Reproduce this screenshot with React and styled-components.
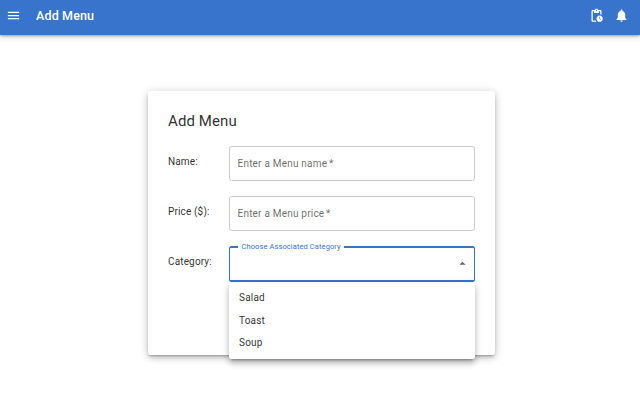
import React from "react";
import styled, { createGlobalStyle } from "styled-components";
import { MdMenu, MdNotifications, MdPendingActions, MdArrowDropUp } from "react-icons/md";

const GlobalStyle = createGlobalStyle`
  * { box-sizing: border-box; }
  body {
    margin: 0;
    background: #fff;
    color: rgba(0, 0, 0, 0.84);
    font-family: Roboto, sans-serif;
    font-size: 10px;
    overflow: hidden;
  }
`;

const Page = styled.div`
  display: flex;
  flex-direction: column;
  height: 414px;
`;

const AppBar = styled.header`
  display: flex;
  align-items: center;
  flex: none;
  height: 35px;
  padding: 0 11px 5px 6px;
  background: #3874cb;
  color: #fff;
  box-shadow: 0 1px 2.5px rgba(0, 0, 0, 0.3), 0 2px 6px rgba(0, 0, 0, 0.14);
`;

const BarTitle = styled.h1`
  flex: 1;
  margin: 0 0 0 15px;
  padding-top: 2px;
  font-size: 12.5px;
  font-weight: 500;
  line-height: 20px;
  letter-spacing: 0.15px;
`;

const IconButton = styled.button`
  display: flex;
  margin: 0;
  padding: 0;
  border: 0;
  background: none;
  color: inherit;
  font-size: 15px;
`;

const Actions = styled.div`
  display: flex;
  gap: 10px;
`;

const Card = styled.main`
  width: 347px;
  height: 263.5px;
  margin: 56px 0 0 148px;
  padding: 20px 20px 0;
  border-radius: 2.5px;
  background: #fff;
  box-shadow: 0 2px 3px -1px rgba(0, 0, 0, 0.3), 0 3px 7px rgba(0, 0, 0, 0.16),
    0 1px 11px rgba(0, 0, 0, 0.12);
`;

const CardTitle = styled.h2`
  margin: 0 0 15px;
  font-size: 15px;
  font-weight: 400;
  line-height: 20px;
  letter-spacing: 0.1px;
`;

const Form = styled.form`
  display: grid;
  gap: 15px;
`;

const Row = styled.div`
  display: grid;
  grid-template-columns: 61px 246px;
  height: 35px;
`;

const Label = styled.span`
  padding-top: 8px;
  line-height: 15px;
  letter-spacing: 0.15px;
`;

const TextField = styled.div`
  height: 35px;
  padding: 9px 7.5px;
  border: 1px solid #cbcbcb;
  border-radius: 2.5px;
  color: rgba(0, 0, 0, 0.6);
  line-height: 15px;
  letter-spacing: 0.21px;
`;

const Required = styled.span`
  margin-left: -1px;
`;

const SelectField = styled.fieldset`
  position: relative;
  display: flex;
  align-items: center;
  justify-content: flex-end;
  height: 41px;
  min-width: 0;
  margin: -5px 0 0;
  padding: 0 4px 5px 8px;
  border: 1.5px solid #3874cb;
  border-width: 2px 1px 2px 1px;
  border-radius: 2.5px;
  color: #666;
  font-size: 15px;
`;

const Legend = styled.legend`
  height: 11px;
  padding: 0 3.5px;
  color: #3874cb;
  font-size: 7.5px;
  line-height: 11px;
  letter-spacing: 0.1px;
`;

const Menu = styled.ul`
  position: absolute;
  top: calc(100% + 2px);
  left: -1px;
  width: 246px;
  height: 77px;
  margin: 0;
  padding: 5px 0;
  border-radius: 0 0 2.5px 2.5px;
  background: #fff;
  color: rgba(0, 0, 0, 0.84);
  font-size: 10px;
  list-style: none;
  box-shadow: 0 3px 3px -2px rgba(0, 0, 0, 0.32), 0 5px 6px rgba(0, 0, 0, 0.16),
    0 2px 9px rgba(0, 0, 0, 0.14);
`;

const MenuItem = styled.li`
  height: 22.5px;
  padding: 0 10px;
  line-height: 22.5px;
  letter-spacing: 0.2px;
`;

const categories = ["Salad", "Toast", "Soup"];

export default function App() {
  return (
    <Page>
      <GlobalStyle />
      <AppBar>
        <IconButton aria-label="Open navigation"><MdMenu /></IconButton>
        <BarTitle>Add Menu</BarTitle>
        <Actions>
          <IconButton aria-label="Pending orders"><MdPendingActions /></IconButton>
          <IconButton aria-label="Notifications"><MdNotifications /></IconButton>
        </Actions>
      </AppBar>
      <Card>
        <CardTitle>Add Menu</CardTitle>
        <Form>
          <Row>
            <Label>Name:</Label>
            <TextField>Enter a Menu name <Required>*</Required></TextField>
          </Row>
          <Row>
            <Label>Price ($):</Label>
            <TextField>Enter a Menu price <Required>*</Required></TextField>
          </Row>
          <Row>
            <Label>Category:</Label>
            <SelectField>
              <Legend>Choose Associated Category</Legend>
              <MdArrowDropUp />
              <Menu>
                {categories.map((name) => <MenuItem key={name}>{name}</MenuItem>)}
              </Menu>
            </SelectField>
          </Row>
        </Form>
      </Card>
    </Page>
  );
}
